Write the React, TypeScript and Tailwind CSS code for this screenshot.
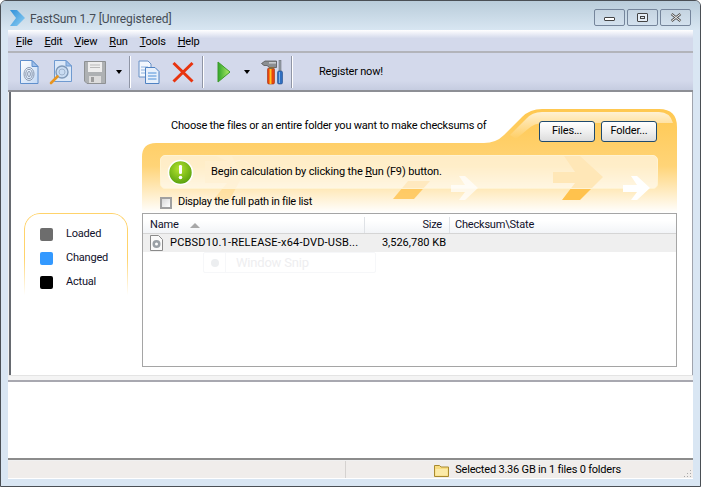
import React from 'react';

const font = "font-['Roboto',sans-serif] tracking-[-0.2px]";

function DocIcon({ children }: { children?: React.ReactNode }) {
    return (
        <svg width="24" height="26" viewBox="0 0 24 26">
            <defs>
                <linearGradient id="docFill" x1="0" y1="0" x2="1" y2="1">
                    <stop offset="0" stopColor="#ffffff" />
                    <stop offset="1" stopColor="#c3d9f5" />
                </linearGradient>
            </defs>
            <path d="M3.5 1.5H15L21 7.5V24.5H3.5Z" fill="url(#docFill)" stroke="#5f8fcc" />
            <path d="M15 1.5V7.5H21Z" fill="#9fc0ea" stroke="#5f8fcc" />
            {children}
        </svg>
    );
}

function FingerprintIcon() {
    return (
        <DocIcon>
            <g fill="none" stroke="#8d9bb0" strokeWidth="1">
                <ellipse cx="12" cy="15" rx="5" ry="6.5" />
                <ellipse cx="12" cy="15" rx="3.2" ry="4.6" />
                <ellipse cx="12" cy="15" rx="1.4" ry="2.6" />
            </g>
        </DocIcon>
    );
}

function SearchIcon() {
    return (
        <svg width="24" height="26" viewBox="0 0 24 26">
            <path d="M5.5 1.5H17L22.5 7V22.5H5.5Z" fill="#dbe8f8" stroke="#6f9ad0" />
            <path d="M17 1.5V7H22.5Z" fill="#9fc0ea" stroke="#6f9ad0" />
            <circle cx="13" cy="13" r="6" fill="#c9dcf2" stroke="#7f99b8" strokeWidth="1.4" />
            <circle cx="13" cy="13" r="3" fill="none" stroke="#9fb4cd" />
            <path d="M8.5 17.5L2 24" stroke="#e8951f" strokeWidth="2.6" strokeLinecap="round" />
        </svg>
    );
}

function FloppyIcon() {
    return (
        <svg width="22" height="23" viewBox="0 0 22 23">
            <path d="M0.5 0.5H21.5V22.5H3L0.5 20Z" fill="#aeb1b3" stroke="#8e9193" />
            <rect x="4" y="1" width="14" height="10" fill="#eeeeee" />
            <path d="M6 4H16M6 6.5H16" stroke="#b9b9b9" />
            <rect x="5" y="15" width="12" height="7" fill="#dcdcdc" />
            <rect x="7" y="16" width="3" height="5" fill="#9c9c9c" />
        </svg>
    );
}

function CopyIcon() {
    return (
        <svg width="22" height="24" viewBox="0 0 22 24">
            <path d="M1 1H10L13 4V17H1Z" fill="#f2f7fd" stroke="#6790c6" />
            <path d="M3 7H10M3 10H10M3 13H10" stroke="#8db2de" />
            <path d="M7.5 7.5H17L21 11.5V23.5H7.5Z" fill="#e7f0fb" stroke="#4f82c2" />
            <path d="M10 13H18.5M10 16H18.5M10 19H18.5" stroke="#4d90d8" />
        </svg>
    );
}

function DeleteIcon() {
    return (
        <svg width="22" height="22" viewBox="0 0 22 22">
            <path d="M1.5 2L20.5 20.5M20.5 2L1.5 20.5" stroke="#e8340f" strokeWidth="3" />
        </svg>
    );
}

function PlayIcon() {
    return (
        <svg width="14" height="22" viewBox="0 0 14 22">
            <defs>
                <linearGradient id="playFill" x1="0" y1="0" x2="1" y2="0">
                    <stop offset="0" stopColor="#2fa52a" />
                    <stop offset="1" stopColor="#b5ef6a" />
                </linearGradient>
            </defs>
            <path d="M1 1L13 11L1 21Z" fill="url(#playFill)" stroke="#3f9a2c" strokeLinejoin="round" />
        </svg>
    );
}

function ToolsIcon() {
    return (
        <svg width="23" height="25" viewBox="0 0 23 25">
            {/* hammer head */}
            <path d="M0.5 3.5L4 1H15.5V7.5H8.5L6 5.5H3Z" fill="#8b8f92" stroke="#4a4a4a" strokeWidth="0.7" />
            <rect x="8" y="2" width="7" height="1.6" fill="#c8cbce" />
            {/* orange handle */}
            <rect x="6.5" y="8" width="7" height="16" rx="1.5" fill="#e8430f" stroke="#9e2d08" strokeWidth="0.6" />
            <rect x="8.5" y="8" width="2" height="16" fill="#ffc21e" />
            <rect x="8" y="7" width="5" height="2" fill="#8a6a40" />
            {/* screwdriver */}
            <rect x="18" y="0.5" width="2" height="11" fill="#9aa3ab" stroke="#5b6269" strokeWidth="0.5" />
            <rect x="16.5" y="11" width="5" height="13" rx="1.5" fill="#2f6fc0" stroke="#1f4c8a" strokeWidth="0.6" />
            <rect x="18" y="12" width="1" height="11" fill="#7fb0ea" />
        </svg>
    );
}

function ToolbarSeparator() {
    return <div className="h-[32px] w-[2px] border-r border-white bg-[#8f95a5]" />;
}

function DropArrow() {
    return <div className="h-0 w-0 border-x-[3.5px] border-t-[4px] border-x-transparent border-t-black" />;
}

function Underlined({ first, rest }: { first: string; rest: string }) {
    return (
        <span>
            <span className="underline underline-offset-1">{first}</span>
            {rest}
        </span>
    );
}

function CaptionButton({ children }: { children: React.ReactNode }) {
    return (
        <div className="flex h-[17px] w-[31px] items-center justify-center rounded-[2px] border border-[#75859b] bg-gradient-to-b from-[#c5d4e1] to-[#d3e1ee]">
            {children}
        </div>
    );
}

function WhiteArrow() {
    return (
        <svg width="27" height="24" viewBox="0 0 27 24">
            <path d="M0 9H14L8 0H14L27 12L14 24H8L14 16H0Z" fill="#ffffff" />
        </svg>
    );
}

function ActionButton({ label, width }: { label: string; width: string }) {
    return (
        <div className={`flex h-[21px] items-center justify-center rounded-[3px] border border-[#1f4a6e] bg-gradient-to-b from-white via-[#f0f0f0] to-[#dcdcdc] text-[11px] text-black ${width}`}>
            {label}
        </div>
    );
}

function LegendRow({ color, label }: { color: string; label: string }) {
    return (
        <div className="flex h-[16px] items-center gap-[13px]">
            <div className={`h-[13px] w-[13px] rounded-[2px] ${color}`} />
            <span className="text-[11px] text-[#10102a]">{label}</span>
        </div>
    );
}

export default function App() {
    return (
        <div className={`${font} flex h-[487px] w-[701px] flex-col overflow-hidden rounded-t-[6px] border border-[#4a4f55] bg-[#d9e6f3]`}>
            {/* Title bar */}
            <div className="flex h-[29px] shrink-0 items-center bg-gradient-to-b from-[#b9ccda] to-[#d8e6f2] pl-[9px] pr-[9px] pt-[5px]">
                <svg width="15" height="16" viewBox="0 0 15 16">
                    <defs>
                        <linearGradient id="logoFill" x1="0" y1="0" x2="1" y2="1">
                            <stop offset="0" stopColor="#2f8fd8" />
                            <stop offset="1" stopColor="#8fd0f4" />
                        </linearGradient>
                    </defs>
                    <path d="M0 0H7L15 8L7 16H0L6 8Z" fill="url(#logoFill)" />
                </svg>
                <span className="ml-[5px] mt-[1px] text-[12px] tracking-[-0.1px] text-[#454c55]">FastSum 1.7 [Unregistered]</span>
                <div className="ml-auto flex gap-[2px] pb-[1px]">
                    <CaptionButton>
                        <div className="mt-[3px] h-[4px] w-[11px] rounded-[1px] border border-[#444] bg-white" />
                    </CaptionButton>
                    <CaptionButton>
                        <div className="flex h-[9px] w-[11px] items-center justify-center rounded-[1px] border border-[#444] bg-[#e5edf5]">
                            <div className="h-[3px] w-[5px] border border-[#444]" />
                        </div>
                    </CaptionButton>
                    <CaptionButton>
                        <svg width="12" height="9" viewBox="0 0 12 9">
                            <path d="M1.5 1L10.5 8M10.5 1L1.5 8" stroke="#555" strokeWidth="2.6" />
                            <path d="M1.5 1L10.5 8M10.5 1L1.5 8" stroke="#f4f4f4" strokeWidth="1" />
                        </svg>
                    </CaptionButton>
                </div>
            </div>

            {/* Client area */}
            <div className="ml-[7px] mr-[7px] flex min-h-0 flex-1 flex-col bg-[#f0f0f0]">
                <div className="flex h-[23px] shrink-0 items-center gap-[12px] border-b-2 border-b-[#b2b4ba] bg-[linear-gradient(#ffffff,#d3d9eb_40%)] pl-[8px] pt-[3px] text-[11px] text-black">
                    <Underlined first="F" rest="ile" />
                    <Underlined first="E" rest="dit" />
                    <Underlined first="V" rest="iew" />
                    <Underlined first="R" rest="un" />
                    <Underlined first="T" rest="ools" />
                    <Underlined first="H" rest="elp" />
                </div>

                {/* Toolbar */}
                <div className="flex h-[39px] shrink-0 items-center border-b-2 border-b-[#8d8f95] bg-[linear-gradient(#d3d9eb_75%,#c5cce0)] pl-[9px] pt-[1px] text-[11px] text-black">
                    <FingerprintIcon />
                    <div className="ml-[8px]"><SearchIcon /></div>
                    <div className="ml-[11px]"><FloppyIcon /></div>
                    <div className="ml-[10px]"><DropArrow /></div>
                    <div className="ml-[7px]"><ToolbarSeparator /></div>
                    <div className="ml-[7px]"><CopyIcon /></div>
                    <div className="ml-[12px]"><DeleteIcon /></div>
                    <div className="ml-[8px]"><ToolbarSeparator /></div>
                    <div className="ml-[13px]"><PlayIcon /></div>
                    <div className="ml-[13px]"><DropArrow /></div>
                    <div className="ml-[11px]"><ToolsIcon /></div>
                    <div className="ml-[7px]"><ToolbarSeparator /></div>
                    <span className="ml-[26px]">Register now!</span>
                </div>

                {/* Main panel */}
                <div className="ml-[1px] flex h-[283px] shrink-0 border-l-2 border-r border-l-[#666a70] border-r-[#a0a4ad] bg-white pl-[13px]">
                    <div className="mt-[121px] w-[104px] shrink-0">
                        <div className="relative h-[82px] pl-[16px] pt-[13px]">
                            <div className="absolute inset-0 rounded-t-[16px] border border-b-0 border-[#ffd36b] [mask-image:linear-gradient(#000_55%,transparent)]" />
                            <div className="flex flex-col gap-[8px]">
                                <LegendRow color="bg-[#6d6d6d]" label="Loaded" />
                                <LegendRow color="bg-[#3399ff]" label="Changed" />
                                <LegendRow color="bg-black" label="Actual" />
                            </div>
                        </div>
                    </div>

                    <div className="relative ml-[14px] mt-[17px] flex w-[535px] flex-col">
                        {/* Orange folder shape with the arrows printed on it */}
                        <svg className="absolute left-0 top-0" width="535" height="104" viewBox="0 0 535 104">
                            <defs>
                                <linearGradient id="folderFill" x1="0" y1="0" x2="0" y2="1">
                                    <stop offset="0" stopColor="#ffc850" />
                                    <stop offset="0.55" stopColor="#ffd478" />
                                    <stop offset="1" stopColor="#ffffff" />
                                </linearGradient>
                                <linearGradient id="folderShine" x1="0" y1="0" x2="0" y2="1">
                                    <stop offset="0" stopColor="#ffffff" stopOpacity="0.75" />
                                    <stop offset="1" stopColor="#ffffff" stopOpacity="0" />
                                </linearGradient>
                            </defs>
                            <path d="M0 104V48Q0 34 14 34H342Q354 34 362 26L380 8Q388 0 400 0H517Q535 0 535 18V104Z" fill="url(#folderFill)" />
                            <path d="M368 26L384 10Q390 3 400 3H517Q528 3 531 14H402Q392 14 386 20L374 30Z" fill="url(#folderShine)" />
                            <path d="M411 63H433L422 47H438L461 68L438 91H420L433 74H411Z" fill="#ffc24d" />
                            <path d="M63 52H85L74 47H90L100 68L88 90H72L85 74H63Z" fill="#ffd98c" opacity="0.6" />
                            <path d="M251 90L266 72H288L272 90Z" fill="#ffc24d" opacity="0.8" />
                        </svg>

                        <div className="relative flex h-[46px] shrink-0 items-start">
                            <span className="ml-[29px] mt-[9px] text-[11px] text-black">Choose the files or an entire folder you want to make checksums of</span>
                            <div className="ml-auto mr-[20px] mt-[12px] flex gap-[6px]">
                                <ActionButton label="Files..." width="w-[56px]" />
                                <ActionButton label="Folder..." width="w-[56px]" />
                            </div>
                        </div>

                        {/* Info banner */}
                        <div className="relative ml-[18px] flex h-[34px] w-[498px] shrink-0 items-center rounded-[5px] border border-[#fff3d2] bg-white/60">
                            <svg width="27" height="27" viewBox="0 0 27 27" className="ml-[6px] shrink-0">
                                <defs>
                                    <radialGradient id="okFill" cx="0.45" cy="0.35" r="0.7">
                                        <stop offset="0" stopColor="#b4e32f" />
                                        <stop offset="1" stopColor="#4f9a0a" />
                                    </radialGradient>
                                </defs>
                                <circle cx="13.5" cy="13.5" r="12" fill="url(#okFill)" stroke="#ffffff" strokeWidth="1.6" />
                                <rect x="12" y="6" width="3" height="9" rx="1.2" fill="#ffffff" />
                                <circle cx="13.5" cy="18.5" r="1.8" fill="#ffffff" />
                            </svg>
                            <span className="ml-[17px] mt-[1px] text-[11px] tracking-[-0.14px] text-black">
                                Begin calculation by clicking the <Underlined first="R" rest="un" /> (F9) button.
                            </span>
                            <div className="absolute left-[290px] top-[20px] opacity-70"><WhiteArrow /></div>
                            <div className="absolute left-[462px] top-[20px]"><WhiteArrow /></div>
                        </div>

                        <div className="relative ml-[18px] mt-[6px] flex h-[15px] items-center gap-[6px]">
                            <div className="h-[12px] w-[12px] border-2 border-[#a0a0a0] bg-gradient-to-br from-[#d8d8d8] to-white" />
                            <span className="text-[11px] tracking-[-0.26px] text-black">Display the full path in file list</span>
                        </div>

                        {/* File list */}
                        <div className="relative mt-[3px] flex h-[154px] flex-col border border-[#a5a5a5] bg-white">
                            <div className="flex h-[20px] shrink-0 border-b border-[#d5d5d5] bg-[linear-gradient(#ffffff_35%,#f2f4f7)] pt-[3px] text-[11px] text-[#10102a]">
                                <div className="flex w-[222px] items-center border-r border-[#dfe2e6] pl-[7px]">
                                    Name
                                    <div className="ml-[11px] h-0 w-0 border-x-[5px] border-b-[5px] border-x-transparent border-b-[#a8a8a8]" />
                                </div>
                                <div className="flex w-[85px] items-center justify-end border-r border-[#dfe2e6] pr-[7px]">Size</div>
                                <div className="flex flex-1 items-center pl-[5px]">Checksum\State</div>
                            </div>
                            <div className="flex h-[18px] shrink-0 items-center bg-[#efefef] text-[11px] text-black">
                                <div className="flex w-[222px] items-center pl-[7px]">
                                    <svg width="13" height="16" viewBox="0 0 13 16" className="shrink-0">
                                        <path d="M0.5 0.5H8.5L12.5 4.5V15.5H0.5Z" fill="#fafafa" stroke="#8a8a8a" />
                                        <circle cx="6.5" cy="9" r="4" fill="#9aa0a6" />
                                        <circle cx="6.5" cy="9" r="1.5" fill="#ffffff" />
                                    </svg>
                                    <span className="ml-[7px] whitespace-nowrap tracking-[0.2px]">PCBSD10.1-RELEASE-x64-DVD-USB...</span>
                                </div>
                                <div className="w-[85px] whitespace-nowrap pr-[4px] text-right tracking-[0px]">3,526,780 KB</div>
                            </div>
                            {/* Ghost of a window behind the capture */}
                            <div className="absolute left-[60px] top-[38px] flex h-[21px] w-[173px] items-center rounded-[2px] border border-[#f6f7f9] pl-[7px] text-[13px] text-[#eeeef0]">
                                <div className="h-[8px] w-[8px] rounded-full bg-[#eceef0]" />
                                <div className="ml-[6px] h-full w-px bg-[#f6f7f9]" />
                                <span className="ml-[10px]">Window Snip</span>
                            </div>
                        </div>
                    </div>
                </div>

                <div className="ml-[1px] h-[5px] shrink-0 border-t border-[#e4e4e4] bg-[#f4f4f4]" />

                {/* Log panel */}
                <div className="h-[80px] shrink-0 border-y-2 border-b-[#8c8c8c] border-t-[#a8a8b0] bg-white" />

                {/* Status bar */}
                <div className="relative mt-[1px] flex h-[17px] shrink-0 items-center bg-[#f0edeb] text-[11px] text-black">
                    <div className="h-full w-[338px] border-r border-[#d5d2d0]" />
                    <div className="ml-auto mr-[72px] flex items-center gap-[6px] pt-[1px]">
                        <svg width="15" height="13" viewBox="0 0 15 13">
                            <path d="M0.5 12.5V1.5H5.5L7 3H14.5V12.5Z" fill="#f8dc80" stroke="#a98a2e" />
                            <path d="M1.5 5H13.5V11.5H1.5Z" fill="#fbeaa8" />
                        </svg>
                        <span className="whitespace-nowrap">Selected 3.36 GB in 1 files 0 folders</span>
                    </div>
                    <svg width="10" height="10" viewBox="0 0 10 10" className="absolute bottom-0 right-[1px]">
                        <path d="M8 2h1v1H8zM5 5h1v1H5zM8 5h1v1H8zM2 8h1v1H2zM5 8h1v1H5zM8 8h1v1H8z" fill="#a8a8a8" />
                    </svg>
                </div>
                <div className="h-px shrink-0 bg-white" />
            </div>
            <div className="h-[7px] shrink-0" />
        </div>
    );
}
